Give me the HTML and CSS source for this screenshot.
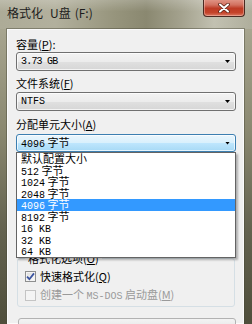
FILE: index.html
```html
<!DOCTYPE html>
<html lang="zh-CN">
<head>
<meta charset="utf-8">
<link rel="stylesheet" href="styles.css">
</head>
<body>
<div class="window">
  <div class="titlebar">
    <span class="title"><span>格式化</span><span class="sp">U盘</span><span class="sp2">(F:)</span></span>
    <div class="close">
      <svg width="12" height="10" viewBox="0 0 12 10">
        <path d="M2 1.5L10 8.5M10 1.5L2 8.5" stroke="#5a2418" stroke-width="3.6" stroke-linecap="round"/>
        <path d="M2 1.5L10 8.5M10 1.5L2 8.5" stroke="#ffffff" stroke-width="2" stroke-linecap="round"/>
      </svg>
    </div>
  </div>
  <div class="frame">
    <div class="panel">
      <div class="label">容量(<u>P</u>):</div>
      <div class="combo"><span class="mono cap">3.73 GB</span><i class="arrow"></i></div>
      <div class="label l2">文件系统(<u>F</u>)</div>
      <div class="combo c2"><span class="mono">NTFS</span><i class="arrow"></i></div>
      <div class="label l3">分配单元大小(<u>A</u>)</div>
      <div class="combo-wrap">
        <div class="combo hot"><span><span class="mono">4096</span> 字节</span><i class="arrow"></i></div>
        <ul class="list">
          <li>默认配置大小</li>
          <li><span class="mono">512</span> 字节</li>
          <li><span class="mono">1024</span> 字节</li>
          <li><span class="mono">2048</span> 字节</li>
          <li class="sel"><span class="mono">4096</span> 字节</li>
          <li><span class="mono">8192</span> 字节</li>
          <li><span class="mono">16 KB</span></li>
          <li><span class="mono">32 KB</span></li>
          <li><span class="mono">64 KB</span></li>
        </ul>
      </div>
      <fieldset class="group">
        <legend>格式化选项(<u>O</u>)</legend>
        <div class="check">
          <span class="box on">
            <svg width="9" height="9" viewBox="0 0 9 9"><path d="M1 4.6L3.4 7.2L8 1.4" fill="none" stroke="#3b54a0" stroke-width="1.8"/></svg>
          </span>
          <span>快速格式化(<u>Q</u>)</span>
        </div>
        <div class="check off">
          <span class="box"></span>
          <span>创建一个 <span class="mono">MS-DOS</span> 启动盘(<u>M</u>)</span>
        </div>
      </fieldset>
      <div class="progress"></div>
    </div>
  </div>
</div>
</body>
</html>
```

FILE: styles.css
```css
* { box-sizing: border-box; }
html, body { margin: 0; padding: 0; }
body {
  width: 252px;
  height: 324px;
  overflow: hidden;
  font-family: "Noto Sans CJK SC", "Liberation Sans", sans-serif;
  font-size: 11px;
  color: #000;
}
.window {
  width: 252px;
  height: 324px;
  display: flex;
  flex-direction: column;
  overflow: hidden;
  background: linear-gradient(to bottom, #b2b09d 0%, #a4a28c 12%, #8a8870 40%, #646350 70%, #4f4e3b 100%);
}
.titlebar {
  height: 29px;
  flex: none;
  display: flex;
  align-items: flex-start;
  padding-left: 7px;
  background:
    linear-gradient(to bottom, rgba(255,255,255,0.2), rgba(255,255,255,0) 40%),
    linear-gradient(to right, #adab97 0%, #b2b09d 22%, #97957d 45%, #8a8870 58%, #a4a28e 72%, #c2c1b1 85%, #afae9c 100%);
}
.title {
  margin-top: 6px;
  font-size: 12px;
  line-height: 14px;
  color: #1c1c1c;
  display: flex;
}
.title .sp { margin-left: 7px; }
.title .sp2 { margin-left: 4px; }
.close {
  margin-left: auto;
  margin-right: 7px;
  margin-top: -1px;
  width: 42px;
  height: 18px;
  border: 1px solid #4a2a22;
  border-top: none;
  border-radius: 0 0 4px 4px;
  background: linear-gradient(to bottom, #e2998a 0%, #d27160 35%, #bd3b25 55%, #c4432a 80%, #da7862 100%);
  box-shadow: inset 0 0 0 1px rgba(255,220,210,0.4);
  display: flex;
  align-items: center;
  justify-content: center;
}
.close svg { display: block; }
.frame {
  flex: 1;
  display: flex;
  padding: 0 8px 0 7px;
  min-height: 0;
}
.panel {
  flex: 1;
  background: #f0f0f0;
  border: 1px solid #fbfbfb;
  box-shadow: 0 0 0 1px rgba(70,70,55,0.45);
  padding: 8px 7px 0 8px;
}
.label {
  height: 12px;
  line-height: 12px;
  white-space: nowrap;
}
.label u, legend u, .check u { text-decoration: underline; }
.l2 { margin-top: 6px; }
.l3 { margin-top: 7px; }
.mono {
  font-family: "Liberation Mono", "DejaVu Sans Mono", monospace;
  font-size: 10px;
}
.cap { letter-spacing: -0.8px; }
.combo {
  margin-top: 2px;
  height: 19px;
  width: 220px;
  border: 1px solid #707070;
  border-radius: 3px;
  background: linear-gradient(to bottom, #f3f3f3 0%, #ececec 50%, #e0e0e0 51%, #d6d6d6 100%);
  box-shadow: inset 0 0 0 1px rgba(255,255,255,0.7);
  display: flex;
  align-items: center;
  justify-content: space-between;
  padding: 0 5px 0 4px;
  line-height: 12px;
  white-space: nowrap;
}
.combo.c2 { margin-top: 3px; }
.arrow {
  width: 5px;
  height: 3px;
  background: #000;
  clip-path: polygon(0 0, 100% 0, 50% 100%);
}
.combo-wrap {
  position: relative;
  margin-top: 4px;
}
.combo.hot {
  margin-top: 0;
  height: 18px;
  border-color: #3c7fb1;
  background: linear-gradient(to bottom, #eaf6fd 0%, #d9f0fc 50%, #bee6fd 51%, #a7d9f5 100%);
}
.list {
  position: absolute;
  left: 0;
  top: 18px;
  width: 220px;
  margin: 0;
  padding: 0;
  list-style: none;
  background: #fff;
  border: 1px solid #646464;
  box-shadow: 2px 2px 2px rgba(0,0,0,0.28);
  z-index: 2;
}
.list li {
  height: 11.5px;
  line-height: 11.5px;
  padding-left: 4px;
  white-space: nowrap;
}
.list li.sel {
  background: #3399ff;
  color: #fff;
}
.group {
  margin: 100px 1px 0 1px;
  padding: 6px 7px 5px 7px;
  border: 1px solid #d5dfe5;
  border-radius: 3px;
  min-width: 0;
}
.group legend {
  padding: 0 3px;
  height: 12px;
  line-height: 12px;
}
.check {
  display: flex;
  align-items: center;
  height: 12px;
  line-height: 12px;
  white-space: nowrap;
}
.check + .check { margin-top: 7px; }
.box {
  width: 11px;
  height: 11px;
  border: 1px solid #8e8f8f;
  background: linear-gradient(135deg, #dcdcdc, #fdfdfd);
  box-shadow: inset 0 0 0 1px #f4f4f4;
  margin-right: 4px;
  display: flex;
  align-items: center;
  justify-content: center;
  flex: none;
}
.box svg { display: block; }
.check.off { color: #9a9a9a; }
.check.off .box {
  border-color: #c4c4c4;
  background: #f4f4f4;
  box-shadow: none;
}
.progress {
  margin: 11px 0 0 2px;
  width: 218px;
  height: 15px;
  border: 1px solid #b2b2b2;
  border-radius: 3px;
  background: linear-gradient(to bottom, #f3f3f3, #e2e2e2);
}
```
